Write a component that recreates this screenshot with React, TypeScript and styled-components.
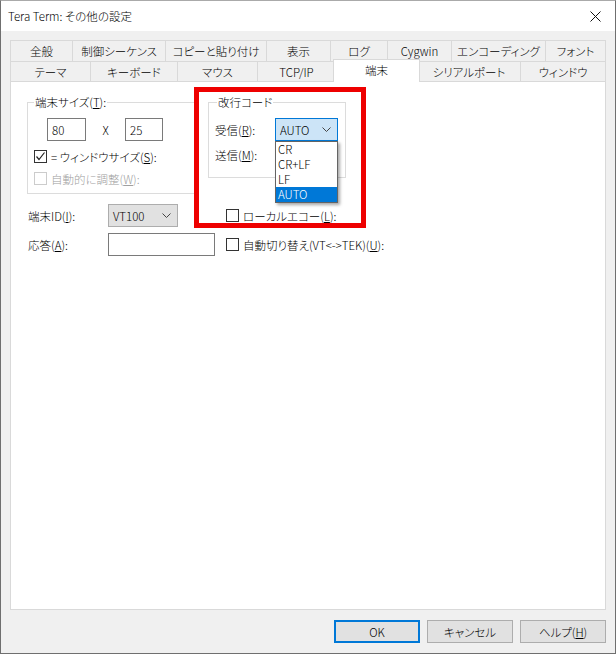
import React from "react";
import styled, { createGlobalStyle, css } from "styled-components";

const GlobalStyle = createGlobalStyle`
  html, body { margin: 0; padding: 0; background: #ffffff; }
  body {
    font-family: "Noto Sans CJK JP", "Noto Sans", sans-serif;
    font-size: 11.5px;
    font-weight: 300;
    color: #000;
    font-feature-settings: "palt";
  }
  * { box-sizing: border-box; }
`;

const Window = styled.div`
  width: 616px;
  height: 654px;
  border: 1px solid #6f6f6f;
  border-top-color: #aaaaaa;
  display: flex;
  flex-direction: column;
  background: #f0f0f0;
`;

const TitleBar = styled.div`
  height: 30px;
  background: #ffffff;
  display: flex;
  align-items: center;
  padding-left: 7px;
  flex-shrink: 0;
`;

const TitleText = styled.span`
  line-height: 16px;
`;

const CloseBox = styled.div`
  margin-left: auto;
  width: 40px;
  height: 30px;
  display: flex;
  align-items: center;
  justify-content: center;
`;

const Body = styled.div`
  flex: 1;
  display: flex;
  flex-direction: column;
  padding: 9px 9px 10px 9px;
`;

const TabRow = styled.div<{ $h: number }>`
  display: flex;
  height: ${(p) => p.$h}px;
  align-items: stretch;
`;

const Tab = styled.div<{ $w: number; $first?: boolean; $active?: boolean }>`
  width: ${(p) => p.$w}px;
  flex-shrink: 0;
  border: 1px solid #d9d9d9;
  border-bottom: none;
  margin-left: ${(p) => (p.$first ? 0 : -1)}px;
  display: flex;
  align-items: center;
  justify-content: center;
  background: #f0f0f0;
  line-height: 14px;
  white-space: nowrap;
  ${(p) =>
    p.$active &&
    css`
      width: ${p.$w + 4}px;
      margin-left: -3px;
      margin-right: -2px;
      margin-top: -2px;
      height: 23px;
      align-self: flex-start;
      background: #ffffff;
      position: relative;
      z-index: 2;
      padding-bottom: 3px;
    `}
`;

const Panel = styled.div`
  height: 529px;
  background: #ffffff;
  border: 1px solid #d9d9d9;
  position: relative;
  padding: 20px 0 0 16px;
  flex-shrink: 0;
`;

const TopSection = styled.div`
  display: flex;
  align-items: flex-start;
  gap: 11px;
`;

const GroupBox = styled.div<{ $w: number; $h: number }>`
  position: relative;
  width: ${(p) => p.$w}px;
  height: ${(p) => p.$h}px;
  border: 1px solid #dcdcdc;
  display: flex;
  flex-direction: column;
`;

const GroupLabel = styled.span<{ $left: number }>`
  position: absolute;
  top: -9px;
  left: ${(p) => p.$left}px;
  background: #ffffff;
  padding: 0 1px;
  line-height: 16px;
  white-space: nowrap;
`;

const SizeRow = styled.div`
  display: flex;
  align-items: center;
  margin: 15px 0 0 19px;
`;

const TextBox = styled.div<{ $w: number; $h?: number }>`
  width: ${(p) => p.$w}px;
  height: ${(p) => p.$h ?? 23}px;
  border: 1px solid #7a7a7a;
  background: #ffffff;
  display: flex;
  align-items: center;
  padding-left: 4px;
  line-height: 14px;
`;

const Times = styled.span`
  width: 39px;
  text-align: center;
`;

const CheckRow = styled.label<{ $mt: number; $ml: number }>`
  display: flex;
  align-items: center;
  margin: ${(p) => p.$mt}px 0 0 ${(p) => p.$ml}px;
  height: 13px;
  line-height: 14px;
  white-space: nowrap;
`;

const Box = styled.span<{ $disabled?: boolean }>`
  width: 13px;
  height: 13px;
  border: 1px solid ${(p) => (p.$disabled ? "#cccccc" : "#333333")};
  background: #ffffff;
  display: inline-flex;
  align-items: center;
  justify-content: center;
  margin-right: 4px;
  flex-shrink: 0;
`;

const CheckText = styled.span<{ $disabled?: boolean }>`
  color: ${(p) => (p.$disabled ? "#a0a0a0" : "#000")};
`;

const FieldRow = styled.div<{ $mt: number }>`
  display: flex;
  align-items: center;
  margin: ${(p) => p.$mt}px 0 0 6px;
  height: 23px;
`;

const FieldLabel = styled.span<{ $w: number }>`
  width: ${(p) => p.$w}px;
  flex-shrink: 0;
  line-height: 14px;
  white-space: nowrap;
`;

const ComboWrap = styled.div`
  position: relative;
`;

const Combo = styled.div<{ $w: number; $focused?: boolean }>`
  width: ${(p) => p.$w}px;
  height: 23px;
  border: 1px solid ${(p) => (p.$focused ? "#0078d7" : "#adadad")};
  background: ${(p) => (p.$focused ? "#cce4f7" : "#e1e1e1")};
  display: flex;
  align-items: center;
  justify-content: space-between;
  padding: 0 6px 0 4px;
  line-height: 14px;
`;

const DropList = styled.div`
  position: absolute;
  top: 23px;
  left: 0;
  width: 63px;
  height: 62px;
  border: 1px solid #646464;
  background: #ffffff;
  box-shadow: 2px 2px 3px rgba(0, 0, 0, 0.35);
  z-index: 3;
  display: flex;
  flex-direction: column;
`;

const DropItem = styled.div<{ $selected?: boolean }>`
  height: 15px;
  line-height: 15px;
  padding-left: 2px;
  background: ${(p) => (p.$selected ? "#0078d7" : "transparent")};
  color: ${(p) => (p.$selected ? "#ffffff" : "#000")};
`;

const BottomGrid = styled.div`
  display: grid;
  grid-template-columns: 80px 119px auto;
  grid-auto-rows: 23px;
  row-gap: 6px;
  align-items: center;
  margin: 10px 0 0 1px;
`;

const GridLabel = styled.span`
  line-height: 14px;
  white-space: nowrap;
`;

const GridCheck = styled.label`
  display: flex;
  align-items: center;
  margin-left: -1px;
  line-height: 14px;
  white-space: nowrap;
`;

const Highlight = styled.div`
  position: absolute;
  left: 183px;
  top: 5px;
  width: 172px;
  height: 141px;
  border: 5px solid #ee0000;
  pointer-events: none;
  z-index: 4;
`;

const Footer = styled.div`
  display: flex;
  justify-content: flex-end;
  gap: 7px;
  margin-top: 10px;
`;

const Button = styled.button<{ $default?: boolean }>`
  width: 86px;
  height: 23px;
  background: #e1e1e1;
  border: 1px solid ${(p) => (p.$default ? "#0078d7" : "#adadad")};
  box-shadow: ${(p) => (p.$default ? "inset 0 0 0 1px #0078d7" : "none")};
  font: inherit;
  line-height: 14px;
  color: #000;
  padding: 0;
  border-radius: 0;
`;

const Chevron = () => (
  <svg width="9" height="5" viewBox="0 0 9 5">
    <polyline points="0.5,0.5 4.5,4.5 8.5,0.5" fill="none" stroke="#444" strokeWidth="1" />
  </svg>
);

const CheckMark = () => (
  <svg width="11" height="11" viewBox="0 0 11 11">
    <polyline points="1.5,5.5 4,8.5 9.5,1.5" fill="none" stroke="#222" strokeWidth="1.2" />
  </svg>
);

const row1 = [
  { t: "全般", w: 63 },
  { t: "制御シーケンス", w: 94 },
  { t: "コピーと貼り付け", w: 102 },
  { t: "表示", w: 65 },
  { t: "ログ", w: 58 },
  { t: "Cygwin", w: 65 },
  { t: "エンコーディング", w: 95 },
  { t: "フォント", w: 61 },
];

const row2 = [
  { t: "テーマ", w: 81 },
  { t: "キーボード", w: 88 },
  { t: "マウス", w: 81 },
  { t: "TCP/IP", w: 79 },
  { t: "端末", w: 83, active: true },
  { t: "シリアルポート", w: 104 },
  { t: "ウィンドウ", w: 86 },
];

export default function App() {
  return (
    <>
      <GlobalStyle />
      <Window>
        <TitleBar>
          <TitleText>Tera Term: その他の設定</TitleText>
          <CloseBox>
            <svg width="11" height="11" viewBox="0 0 11 11">
              <path d="M0.5 0.5 L10.5 10.5 M10.5 0.5 L0.5 10.5" stroke="#111" strokeWidth="1" />
            </svg>
          </CloseBox>
        </TitleBar>
        <Body>
          <TabRow $h={21}>
            {row1.map((t, i) => (
              <Tab key={t.t} $w={t.w} $first={i === 0}>
                {t.t}
              </Tab>
            ))}
          </TabRow>
          <TabRow $h={20}>
            {row2.map((t, i) => (
              <Tab key={t.t} $w={t.w} $first={i === 0} $active={t.active}>
                {t.t}
              </Tab>
            ))}
          </TabRow>
          <Panel>
            <TopSection>
              <GroupBox $w={170} $h={92}>
                <GroupLabel $left={6}>
                  端末サイズ(<u>T</u>):
                </GroupLabel>
                <SizeRow>
                  <TextBox $w={39}>80</TextBox>
                  <Times>X</Times>
                  <TextBox $w={38}>25</TextBox>
                </SizeRow>
                <CheckRow $mt={9} $ml={6}>
                  <Box>
                    <CheckMark />
                  </Box>
                  <CheckText>
                    = ウィンドウサイズ(<u>S</u>):
                  </CheckText>
                </CheckRow>
                <CheckRow $mt={9} $ml={6}>
                  <Box $disabled />
                  <CheckText $disabled>
                    自動的に調整(<u>W</u>):
                  </CheckText>
                </CheckRow>
              </GroupBox>
              <GroupBox $w={138} $h={76}>
                <GroupLabel $left={8}>改行コード</GroupLabel>
                <FieldRow $mt={15}>
                  <FieldLabel $w={60}>
                    受信(<u>R</u>):
                  </FieldLabel>
                  <ComboWrap>
                    <Combo $w={63} $focused>
                      <span>AUTO</span>
                      <Chevron />
                    </Combo>
                    <DropList>
                      <DropItem>CR</DropItem>
                      <DropItem>CR+LF</DropItem>
                      <DropItem>LF</DropItem>
                      <DropItem $selected>AUTO</DropItem>
                    </DropList>
                  </ComboWrap>
                </FieldRow>
                <FieldRow $mt={2}>
                  <FieldLabel $w={60}>
                    送信(<u>M</u>):
                  </FieldLabel>
                  <Combo $w={63} />
                </FieldRow>
              </GroupBox>
            </TopSection>
            <BottomGrid>
              <GridLabel>
                端末ID(<u>I</u>):
              </GridLabel>
              <div>
                <Combo $w={70}>
                  <span>VT100</span>
                  <Chevron />
                </Combo>
              </div>
              <GridCheck>
                <Box />
                <span>
                  ローカルエコー(<u>L</u>):
                </span>
              </GridCheck>
              <GridLabel>
                応答(<u>A</u>):
              </GridLabel>
              <div>
                <TextBox $w={107} $h={23} />
              </div>
              <GridCheck>
                <Box />
                <span>
                  自動切り替え(VT&lt;-&gt;TEK)(<u>U</u>):
                </span>
              </GridCheck>
            </BottomGrid>
            <Highlight />
          </Panel>
          <Footer>
            <Button $default>OK</Button>
            <Button>キャンセル</Button>
            <Button>
              ヘルプ(<u>H</u>)
            </Button>
          </Footer>
        </Body>
      </Window>
    </>
  );
}
